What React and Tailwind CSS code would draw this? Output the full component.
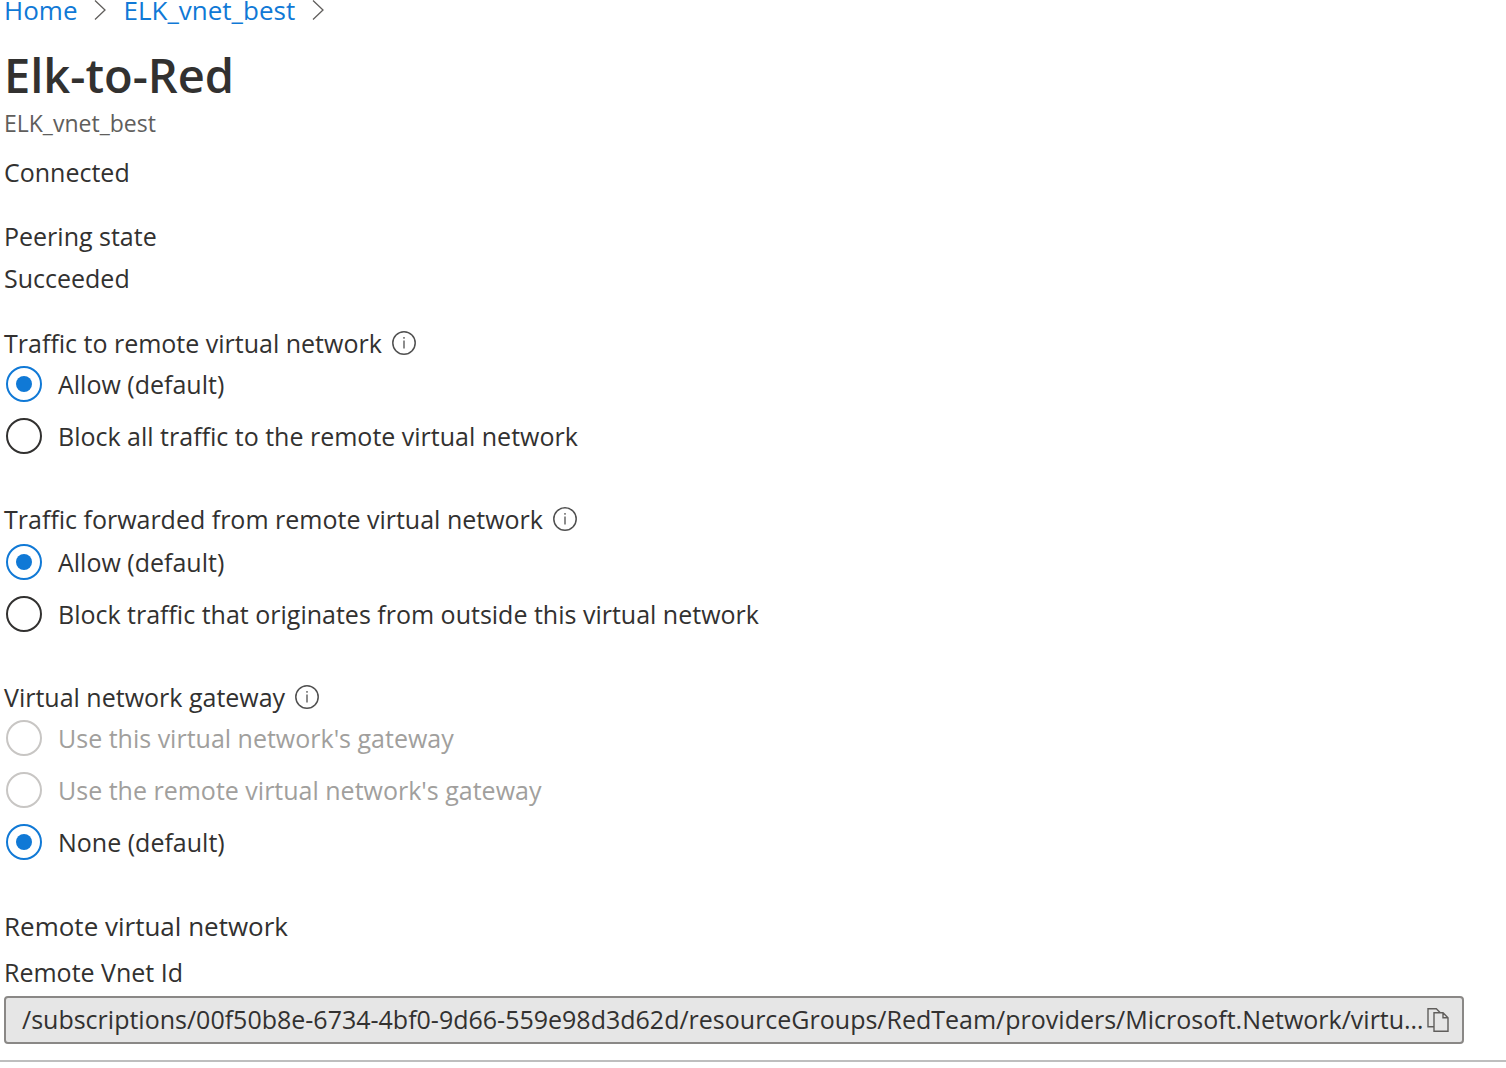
import React from "react";

function Info({ label }) {
  return (
    <button type="button" aria-label={label} className="ml-[10px] h-6 w-6 shrink-0 text-[#505050]">
      <svg viewBox="0 0 24 24" className="block h-full w-full" fill="none" stroke="currentColor">
        <circle cx="12" cy="12" r="11.2" strokeWidth="1.5" />
        <path d="M12 9.5v8M12 6v1.8" strokeWidth="1.3" />
      </svg>
    </button>
  );
}

function Radio({ name, label, checked, disabled }) {
  return (
    <label className={disabled ? "flex h-9 items-center text-[#a19f9d]" : "flex h-9 items-center"}>
      <input
        type="radio"
        name={name}
        defaultChecked={checked}
        disabled={disabled}
        className="grid h-9 w-9 shrink-0 appearance-none place-items-center rounded-full border-2 border-[#323130] bg-white before:h-4 before:w-4 before:rounded-full checked:border-[#1079d6] checked:before:bg-[#1079d6] disabled:border-[#c8c6c4]"
      />
      <span className="ml-4">{label}</span>
    </label>
  );
}

function Group({ title, name, options, className }) {
  return (
    <fieldset className={className}>
      <legend className="flex h-9 items-center">
        <span className="-ml-[2px]">{title}</span>
        <Info label={"About " + title} />
      </legend>
      <div className="flex flex-col gap-4">
        {options.map((o) => (
          <Radio key={o.label} name={name} {...o} />
        ))}
      </div>
    </fieldset>
  );
}

function Chevron() {
  return (
    <svg viewBox="0 0 12 20" className="h-5 w-3" fill="none" stroke="#605e5c" strokeWidth="1.3" aria-hidden="true">
      <path d="M1 .5l10 9.5-10 9.5" />
    </svg>
  );
}

export default function App() {
  return (
    <main className="bg-white pb-[6px] font-['Open_Sans',sans-serif] text-[25px] leading-[36px] text-[#323130]">
      <nav aria-label="Breadcrumb" className="flex h-7 items-center gap-[17px] pb-2 pl-1 text-[26px] text-[#1079d6]">
        <a href="#home">Home</a>
        <Chevron />
        <a href="#vnet">ELK_vnet_best</a>
        <Chevron />
      </nav>
      <header className="mt-[15px] pl-1">
        <h1 className="text-[47px] font-semibold leading-[64px]">Elk-to-Red</h1>
        <p className="text-[23px] leading-[32px] text-[#605e5c]">ELK_vnet_best</p>
      </header>
      <section className="pl-1">
        <p className="mt-[15px]">Connected</p>
        <p className="mt-7">Peering state</p>
        <p className="mt-[6px]">Succeeded</p>
      </section>
      <form className="pl-[6px]">
        <Group className="mt-[29px] space-y-[5px]" title="Traffic to remote virtual network" name="to" options={[{ label: "Allow (default)", checked: true }, { label: "Block all traffic to the remote virtual network" }]} />
        <Group className="mt-[47px] space-y-[7px]" title="Traffic forwarded from remote virtual network" name="from" options={[{ label: "Allow (default)", checked: true }, { label: "Block traffic that originates from outside this virtual network" }]} />
        <Group className="mt-[47px] space-y-[5px]" title="Virtual network gateway" name="gateway" options={[{ label: "Use this virtual network's gateway", disabled: true }, { label: "Use the remote virtual network's gateway", disabled: true }, { label: "None (default)", checked: true }]} />
      </form>
      <section className="mt-12 border-b-2 border-[#bebebe] pb-4 pl-1 pr-[42px]">
        <h2 className="text-[26px]">Remote virtual network</h2>
        <label htmlFor="vnet-id" className="mt-[10px] block">Remote Vnet Id</label>
        <div className="mt-[6px] flex h-12 items-center rounded-[4px] border-2 border-[#8a8886] bg-[#e6e6e6] pl-4 pr-3">
          <input id="vnet-id" readOnly className="min-w-0 flex-1 truncate bg-transparent pb-[2px] outline-none" value="/subscriptions/00f50b8e-6734-4bf0-9d66-559e98d3d62d/resourceGroups/RedTeam/providers/Microsoft.Network/virtualNetworks/RedTeam-vnet" />
          <button type="button" aria-label="Copy to clipboard" className="h-6 w-6 shrink-0 text-[#605e5c]">
            <svg viewBox="0 0 24 24" className="h-6 w-6" fill="none" stroke="currentColor" strokeWidth="1.4">
              <path d="M8 18.8H2V.8h8.3l4 4M8 4.8h9l5 5v13.4H8zM17 4.8v5h5" />
            </svg>
          </button>
        </div>
      </section>
    </main>
  );
}
